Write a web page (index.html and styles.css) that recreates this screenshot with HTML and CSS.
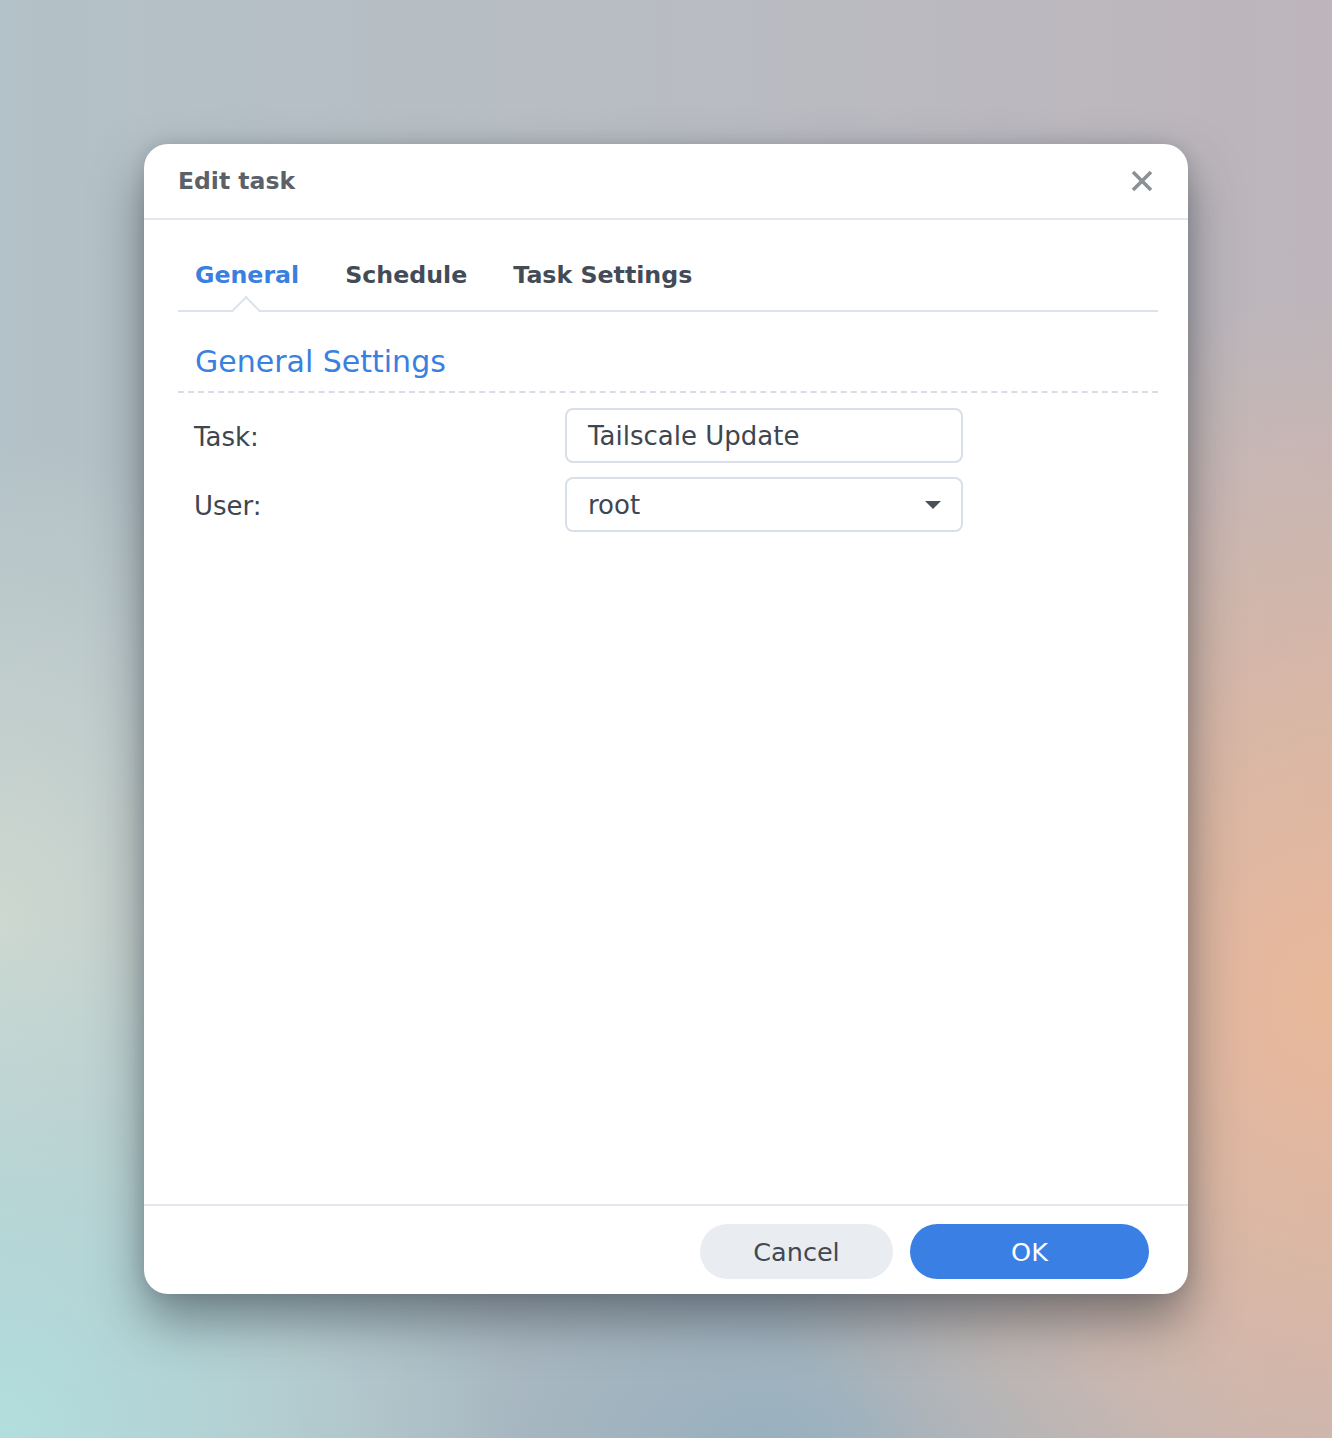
FILE: index.html
```html
<!DOCTYPE html>
<html lang="en">
<head>
<meta charset="utf-8">
<title>Edit task</title>
<link rel="stylesheet" href="styles.css">
</head>
<body>
<div class="dialog">
  <div class="header">
    <div class="title">Edit task</div>
    <button class="close" aria-label="Close">
      <svg width="22" height="22" viewBox="0 0 22 22"><path d="M2 2 L20 20 M20 2 L2 20" stroke="#8b9096" stroke-width="3.6" stroke-linecap="butt"/></svg>
    </button>
  </div>
  <div class="body">
    <div class="tabs">
      <div class="tab active">General<span class="notch"></span></div>
      <div class="tab">Schedule</div>
      <div class="tab">Task Settings</div>
    </div>
    <div class="section-title">General Settings</div>
    <div class="form">
      <div class="row">
        <div class="label">Task:</div>
        <div class="field">Tailscale Update</div>
      </div>
      <div class="row">
        <div class="label">User:</div>
        <div class="field select">root<span class="caret"></span></div>
      </div>
    </div>
  </div>
  <div class="footer">
    <button class="btn cancel">Cancel</button>
    <button class="btn ok">OK</button>
  </div>
</div>
</body>
</html>
```
FILE: styles.css
```css
html, body {
  margin: 0;
  padding: 0;
}
body {
  width: 1332px;
  height: 1438px;
  overflow: hidden;
  font-family: "DejaVu Sans", Verdana, sans-serif;
  background:
    radial-gradient(ellipse 620px 700px at 1332px 1000px, rgba(233,184,154,1) 0%, rgba(233,184,154,0.6) 45%, rgba(233,184,154,0) 100%),
    radial-gradient(ellipse 520px 520px at 0px 1438px, rgba(178,222,222,1) 0%, rgba(178,222,222,0) 100%),
    radial-gradient(ellipse 380px 480px at 0px 920px, rgba(210,220,210,0.85) 0%, rgba(210,220,210,0) 100%),
    radial-gradient(ellipse 500px 300px at 760px 1438px, rgba(152,176,190,1) 0%, rgba(152,176,190,0) 100%),
    linear-gradient(to right, #b3c2c8 0%, #b8bcc2 50%, #bdb5bb 100%);
}
.dialog {
  margin: 144px 0 0 144px;
  width: 1044px;
  height: 1150px;
  background: #fff;
  border-radius: 24px;
  display: flex;
  flex-direction: column;
  overflow: hidden;
  box-shadow: 0 26px 50px rgba(40, 50, 60, 0.5), 0 0 16px rgba(40, 50, 60, 0.15);
}
.header {
  height: 74px;
  flex: none;
  border-bottom: 2px solid #e3e8ee;
  display: flex;
  align-items: center;
  justify-content: space-between;
  padding: 0 35px 0 34px;
}
.title {
  font-weight: bold;
  font-size: 23.5px;
  color: #5a6169;
}
.close {
  border: 0;
  background: none;
  padding: 0;
  width: 22px;
  height: 22px;
  display: flex;
}
.body {
  flex: 1;
  padding: 0 30px 0 34px;
}
.tabs {
  display: flex;
  padding: 40px 0 20px 17px;
  border-bottom: 2px solid #dde3ec;
  gap: 46px;
}
.tab {
  position: relative;
  font-weight: bold;
  font-size: 23.7px;
  line-height: 30px;
  color: #434c56;
}
.tab.active {
  color: #3a80e0;
}
.notch {
  position: absolute;
  left: 41px;
  bottom: -30px;
  width: 18px;
  height: 18px;
  background: #fff;
  border-left: 2px solid #dde3ec;
  border-top: 2px solid #dde3ec;
  transform: rotate(45deg);
}
.section-title {
  font-size: 30px;
  line-height: 36px;
  color: #3a80e0;
  padding: 32px 0 11px 17px;
  border-bottom: 2px dashed #d6dde7;
}
.form {
  padding-top: 15px;
  display: flex;
  flex-direction: column;
  gap: 14px;
}
.row {
  display: flex;
  align-items: center;
}
.label {
  width: 371px;
  padding-left: 16px;
  padding-top: 3px;
  font-size: 26px;
  color: #3d4651;
}
.field {
  box-sizing: border-box;
  width: 398px;
  height: 55px;
  border: 2px solid #d9dfe7;
  border-radius: 8px;
  padding: 0 20px 0 21px;
  display: flex;
  align-items: center;
  font-size: 26px;
  color: #3d4651;
}
.select {
  justify-content: space-between;
}
.caret {
  width: 0;
  height: 0;
  border-left: 8px solid transparent;
  border-right: 8px solid transparent;
  border-top: 8px solid #4a5058;
}
.footer {
  flex: none;
  border-top: 2px solid #e3e8ee;
  display: flex;
  justify-content: flex-end;
  gap: 17px;
  padding: 18px 39px 15px 0;
}
.btn {
  height: 55px;
  border: 0;
  border-radius: 28px;
  font-family: "DejaVu Sans", Verdana, sans-serif;
  font-size: 25.5px;
  padding: 0;
}
.cancel {
  width: 193px;
  background: #e9edf1;
  color: #414852;
}
.ok {
  width: 239px;
  background: #3a80e4;
  color: #fff;
}
```
